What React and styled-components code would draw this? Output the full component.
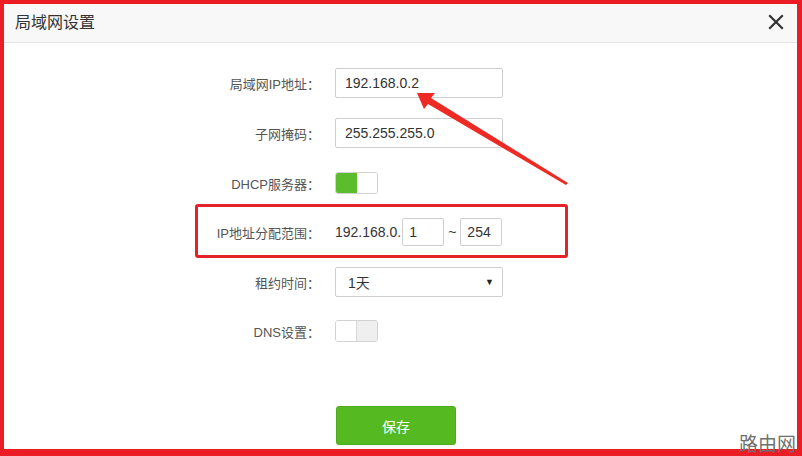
import React from "react";
import styled, { createGlobalStyle } from "styled-components";

const Global = createGlobalStyle`
  html, body { margin: 0; padding: 0; background: #fff; }
  body { font-family: "Liberation Sans", "Noto Sans CJK SC", sans-serif; }
  * { box-sizing: border-box; }
`;

const Outer = styled.div`
  position: relative;
  width: 802px;
  height: 456px;
`;

const Frame = styled.div`
  width: 802px;
  height: 456px;
  border-style: solid;
  border-color: #ec1c24;
  border-width: 4px 5px 7px 4px;
  background: #fff;
  display: flex;
  flex-direction: column;
`;

const Header = styled.div`
  height: 39px;
  flex: none;
  background: #f8f8f9;
  border-bottom: 1px solid #e6e6e6;
  display: flex;
  align-items: center;
  justify-content: space-between;
  padding: 0 13px 0 11px;
`;

const Title = styled.div`
  font-size: 16px;
  color: #333;
  font-family: "Noto Sans CJK SC", sans-serif;
  line-height: 20px;
  margin-top: -4px;
`;

const Close = styled.button`
  border: 0;
  background: transparent;
  padding: 0;
  width: 16px;
  height: 16px;
  display: flex;
  margin-top: -2px;
`;

const Body = styled.div`
  flex: 1;
  display: flex;
  flex-direction: column;
  padding-top: 25px;
`;

const Row = styled.div`
  position: relative;
  display: flex;
  align-items: center;
  height: 30px;
  margin-bottom: ${(p) => p.$gap ?? 20}px;
`;

const Label = styled.div`
  width: 316px;
  flex: none;
  text-align: right;
  font-size: 13px;
  color: #555;
  font-family: "Liberation Sans", "Noto Sans CJK SC", sans-serif;
  margin-right: 15px;
  white-space: nowrap;
`;

const TextInput = styled.input`
  width: ${(p) => p.$w || 168}px;
  height: ${(p) => p.$h || 30}px;
  border: 1px solid #cfcfcf;
  border-radius: 2px;
  padding: 0 0 0 ${(p) => p.$pad ?? 9}px;
  font-size: 14px;
  color: #333;
  font-family: "Liberation Sans", sans-serif;
  outline: none;
  background: #fff;
`;

const PlainText = styled.span`
  font-size: 14px;
  color: #333;
  font-family: "Liberation Sans", sans-serif;
  margin-right: ${(p) => p.$mr ?? 0}px;
  margin-left: ${(p) => p.$ml ?? 0}px;
`;

const SelectBox = styled.div`
  width: 168px;
  height: 30px;
  border: 1px solid #cfcfcf;
  border-radius: 2px;
  display: flex;
  align-items: center;
  justify-content: space-between;
  padding: 0 8px 0 12px;
  font-size: 14px;
  color: #333;
  font-family: "Liberation Sans", "Noto Sans CJK SC", sans-serif;
`;

const Caret = styled.span`
  font-size: 9px;
  color: #222;
`;

const Toggle = styled.div`
  width: 43px;
  height: 22px;
  border: 1px solid #d2d2d2;
  border-radius: 3px;
  display: flex;
  overflow: hidden;
`;

const ToggleHalf = styled.div`
  flex: 1;
  background: ${(p) => p.$bg};
  border-right: ${(p) => (p.$divider ? "1px solid #d9d9d9" : "0")};
`;

const Annotation = styled.div`
  position: absolute;
  left: 191px;
  top: -13px;
  width: 373px;
  height: 54px;
  border: 3px solid #e52228;
  border-radius: 3px;
  pointer-events: none;
`;

const Footer = styled.div`
  display: flex;
  padding-left: 332px;
  margin-top: 60px;
`;

const SaveButton = styled.button`
  width: 120px;
  height: 39px;
  border: 1px solid #4eab1c;
  border-radius: 3px;
  background: #55b922;
  color: #fff;
  font-size: 14px;
  font-family: "Noto Sans CJK SC", sans-serif;
`;

const ArrowLayer = styled.svg`
  position: absolute;
  left: 0;
  top: 0;
  pointer-events: none;
`;

const Watermark = styled.div`
  position: absolute;
  right: 6px;
  bottom: 2px;
  font-size: 19px;
  color: #6f6f6f;
  font-family: "Noto Sans CJK SC", sans-serif;
  line-height: 22px;
`;

const Switch = ({ on }) => (
  <Toggle>
    {on ? (
      <>
        <ToggleHalf $bg="#5bbd2b" />
        <ToggleHalf $bg="#fff" />
      </>
    ) : (
      <>
        <ToggleHalf $bg="#fff" $divider />
        <ToggleHalf $bg="#efefef" />
      </>
    )}
  </Toggle>
);

export default function App() {
  return (
    <>
      <Global />
      <Outer>
        <Frame>
          <Header>
            <Title>局域网设置</Title>
            <Close aria-label="close">
              <svg width="16" height="16" viewBox="0 0 16 16">
                <path d="M2 2 L14 14 M14 2 L2 14" stroke="#333" strokeWidth="2.2" strokeLinecap="square" />
              </svg>
            </Close>
          </Header>
          <Body>
            <Row>
              <Label>局域网IP地址：</Label>
              <TextInput readOnly value="192.168.0.2" />
            </Row>
            <Row>
              <Label>子网掩码：</Label>
              <TextInput readOnly value="255.255.255.0" />
            </Row>
            <Row $gap={19}>
              <Label>DHCP服务器：</Label>
              <Switch on />
            </Row>
            <Row>
              <Annotation />
              <Label>IP地址分配范围：</Label>
              <PlainText $mr={1}>192.168.0.</PlainText>
              <TextInput readOnly value="1" $w={42} $h={28} $pad={6} />
              <PlainText $ml={4} $mr={4}>~</PlainText>
              <TextInput readOnly value="254" $w={42} $h={28} $pad={6} />
            </Row>
            <Row $gap={19}>
              <Label>租约时间：</Label>
              <SelectBox>
                <span>1天</span>
                <Caret>▼</Caret>
              </SelectBox>
            </Row>
            <Row $gap={0}>
              <Label>DNS设置：</Label>
              <Switch />
            </Row>
            <Footer>
              <SaveButton>保存</SaveButton>
            </Footer>
          </Body>
        </Frame>
        <ArrowLayer width="802" height="456" viewBox="0 0 802 456">
          <polygon
            points="417,93 435,93 431,98 568,183 566,185 428,104 424,109"
            fill="#ee2a24"
          />
        </ArrowLayer>
        <Watermark>路由网</Watermark>
      </Outer>
    </>
  );
}
